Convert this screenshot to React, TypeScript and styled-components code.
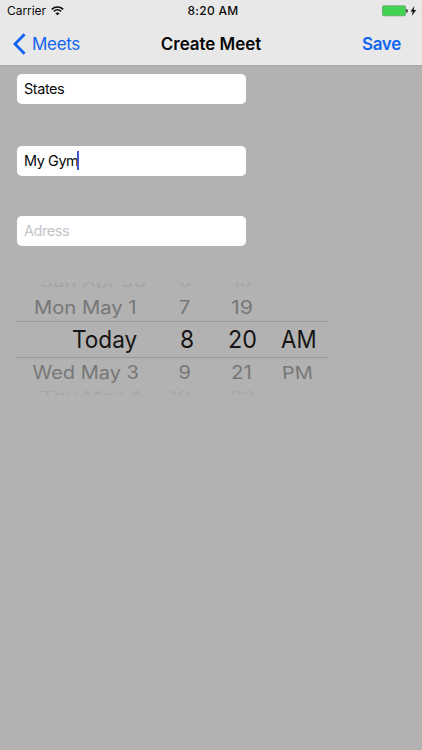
import React from 'react';
import styled, { createGlobalStyle } from 'styled-components';

const GlobalStyle = createGlobalStyle`
  * { box-sizing: border-box; }
  body { margin: 0; background: #b2b2b2; font-family: Inter, "Liberation Sans", sans-serif; }
`;

const Screen = styled.div`
  width: 422px;
  height: 750px;
  overflow: hidden;
  background: #b2b2b2;
`;

const Header = styled.header`
  height: 66px;
  background: #e8e8e8;
  border-bottom: 1px solid #a9a9a9;
`;

const StatusBar = styled.div`
  display: grid;
  grid-template-columns: 1fr auto 1fr;
  align-items: center;
  height: 22px;
  padding: 0 5px 0 7px;
  font-size: 12px;
  line-height: 22px;
  color: #0b0b0b;
`;

const Carrier = styled.div`
  display: flex;
  align-items: center;
  gap: 5px;
  letter-spacing: -0.05px;
`;

const Clock = styled.div`
  font-weight: 500;
  letter-spacing: 0.3px;
  padding-left: 2px;
`;

const Power = styled.div`
  display: flex;
  align-items: center;
  justify-content: flex-end;
`;

const NavBar = styled.nav`
  display: grid;
  grid-template-columns: 1fr auto 1fr;
  align-items: center;
  height: 43px;
  line-height: 20px;
  padding: 0 21px 0 13px;
  font-size: 17px;
  color: #1065f2;
`;

const BackButton = styled.div`
  display: flex;
  align-items: center;
  gap: 6px;
  letter-spacing: -0.3px;
`;

const Title = styled.div`
  font-weight: 600;
  color: #080808;
  letter-spacing: -0.05px;
  padding-left: 8px;
`;

const SaveButton = styled.div`
  font-weight: 600;
  text-align: right;
  letter-spacing: -0.3px;
`;

const Form = styled.div`
  display: flex;
  flex-direction: column;
  padding: 8px 0 0 17px;
`;

const Field = styled.div<{ $gap: number; $placeholder?: boolean }>`
  display: flex;
  align-items: center;
  width: 229px;
  height: 30px;
  margin-bottom: ${(p) => p.$gap}px;
  padding: 0 7px 2px;
  border-radius: 5px;
  background: #fff;
  box-shadow: 0 0 1px #c8c8c8;
  font-size: 14.5px;
  letter-spacing: -0.45px;
  color: ${(p) => (p.$placeholder ? '#c3c3c9' : '#0a0a0a')};
`;

const Caret = styled.span`
  width: 2px;
  height: 19px;
  margin-left: -1px;
  background: #3f57c9;
`;

const Picker = styled.div`
  width: 313px;
  margin: 37px 0 0 16px;
`;

type RowKind = 'above' | 'near' | 'selected' | 'below';

const rowStyles: Record<RowKind, { size: number; color: string; line: number; align: string }> = {
  above: { size: 20, color: '#a4a4a4', line: 1, align: 'start' },
  near: { size: 20, color: '#777', line: 30, align: 'center' },
  selected: { size: 24, color: '#151515', line: 30, align: 'center' },
  below: { size: 20, color: '#a6a6a6', line: 18, align: 'start' },
};

const PickerRow = styled.div<{ $height: number; $kind: RowKind }>`
  display: grid;
  grid-template-columns: 148px 60px 55px 50px;
  align-items: ${(p) => rowStyles[p.$kind].align};
  height: ${(p) => p.$height}px;
  overflow: hidden;
  font-size: ${(p) => rowStyles[p.$kind].size}px;
  line-height: ${(p) => rowStyles[p.$kind].line}px;
  color: ${(p) => rowStyles[p.$kind].color};
  border: solid #999;
  border-width: ${(p) => (p.$kind === 'selected' ? '1px 0' : '0')};
`;

const Cell = styled.span<{ $left: number; $sx?: number; $sy?: number; $skew?: number }>`
  justify-self: start;
  margin-left: ${(p) => p.$left}px;
  white-space: nowrap;
  transform-origin: left center;
  transform: scale(${(p) => p.$sx ?? 1}, ${(p) => p.$sy ?? 1}) skewX(${(p) => p.$skew ?? 0}deg);
`;

const WifiIcon = () => (
  <svg width="13" height="10" viewBox="0 0 13 10" fill="none" stroke="#0b0b0b" strokeWidth="1.6">
    <path d="M.8 3.3C4 .3 9 .3 12.2 3.3" />
    <path d="M2.9 5.4C5 3.5 8 3.5 10.1 5.4" />
    <path d="M6.5 9.2 4.4 7.2C5.6 6.1 7.4 6.1 8.6 7.2Z" fill="#0b0b0b" stroke="none" />
  </svg>
);

const BatteryIcon = () => (
  <svg width="35" height="12" viewBox="0 0 35 12">
    <rect x=".5" y=".8" width="23" height="10" rx="1.2" fill="#42d451" stroke="#63966a" strokeWidth=".7" />
    <path d="M24.2 3.9c2.2.2 2.2 3.6 0 3.8Z" fill="#222" />
    <path d="M32.4 1 28.5 6.5h2.1l-.8 4.3 4.4-5.7h-2.5Z" fill="#111" />
  </svg>
);

const BackIcon = () => (
  <svg width="13" height="22" viewBox="0 0 13 22" fill="none" stroke="#1065f2" strokeWidth="2.9">
    <path d="M11.6 1.3 2 11 11.6 20.7" />
  </svg>
);

export default function App() {
  return (
    <>
      <GlobalStyle />
      <Screen>
        <Header>
          <StatusBar>
            <Carrier>Carrier <WifiIcon /></Carrier>
            <Clock>8:20 AM</Clock>
            <Power><BatteryIcon /></Power>
          </StatusBar>
          <NavBar>
            <BackButton><BackIcon />Meets</BackButton>
            <Title>Create Meet</Title>
            <SaveButton>Save</SaveButton>
          </NavBar>
        </Header>
        <Form>
          <Field $gap={42}>States</Field>
          <Field $gap={40}>My Gym<Caret /></Field>
          <Field $gap={0} $placeholder>Adress</Field>
        </Form>
        <Picker>
          <PickerRow $kind="above" $height={10}>
            <Cell $left={24} $sx={1} $sy={0.6}>Sun Apr 30</Cell>
            <Cell $left={15} $sy={0.6}>6</Cell>
            <Cell $left={8} $sx={0.95} $sy={0.6}>18</Cell>
          </PickerRow>
          <PickerRow $kind="near" $height={28}>
            <Cell $left={17.5} $sx={1.01} $sy={0.9}>Mon May 1</Cell>
            <Cell $left={15} $sy={0.9}>7</Cell>
            <Cell $left={6.5} $sx={1.07} $sy={0.9}>19</Cell>
          </PickerRow>
          <PickerRow $kind="selected" $height={37}>
            <Cell $left={56} $sx={0.94}>Today</Cell>
            <Cell $left={15.5} $sx={0.95}>8</Cell>
            <Cell $left={4} $sx={0.97}>20</Cell>
            <Cell $left={2} $sx={0.93}>AM</Cell>
          </PickerRow>
          <PickerRow $kind="near" $height={29}>
            <Cell $left={16.5} $sx={1} $sy={0.9}>Wed May 3</Cell>
            <Cell $left={14.5} $sy={0.9}>9</Cell>
            <Cell $left={6.5} $sx={1.03} $sy={0.9}>21</Cell>
            <Cell $left={2.5} $sy={0.9} $skew={4}>PM</Cell>
          </PickerRow>
          <PickerRow $kind="below" $height={8}>
            <Cell $left={25} $sx={1} $sy={0.6}>Thu May 4</Cell>
            <Cell $left={5} $sy={0.6}>10</Cell>
            <Cell $left={6} $sy={0.6}>22</Cell>
          </PickerRow>
        </Picker>
      </Screen>
    </>
  );
}
